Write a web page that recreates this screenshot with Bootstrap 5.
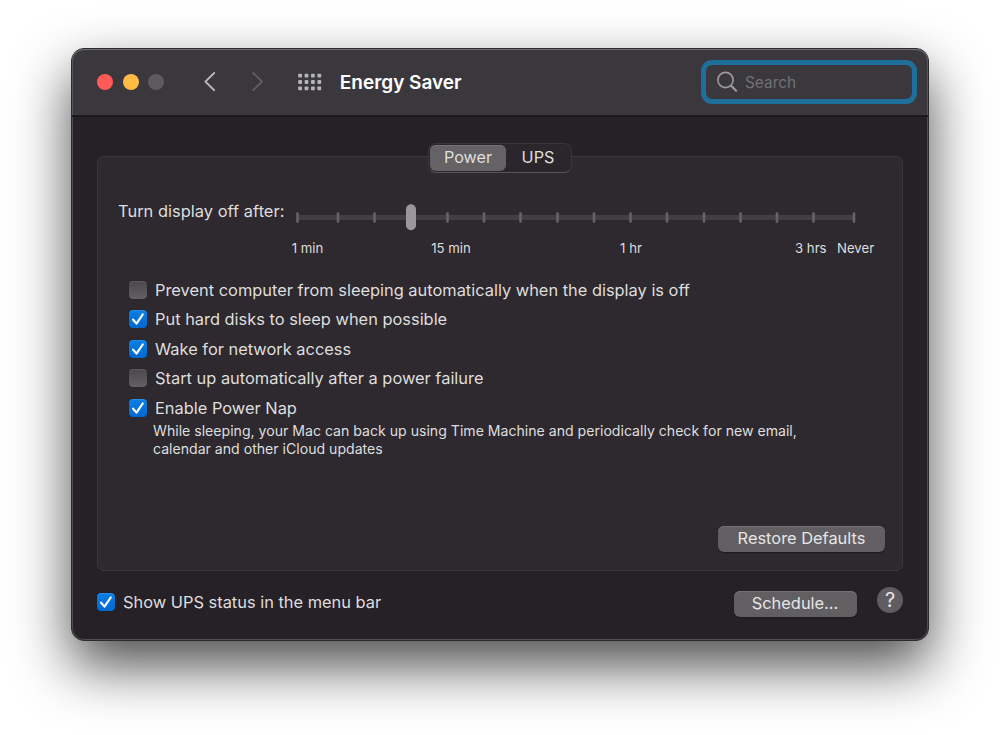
<!DOCTYPE html>
<html lang="en" data-bs-theme="dark">
<head>
<meta charset="utf-8">
<title>Energy Saver</title>
<link href="https://cdn.jsdelivr.net/npm/bootstrap@5.3.0/dist/css/bootstrap.min.css" rel="stylesheet">
<style>
body{background:#fff;font-family:Inter,"Liberation Sans",sans-serif;font-size:16.4px;line-height:20px;color:#dfdedf;height:735px;overflow:hidden;padding:48px 0 0 71px}
.window{width:858px;height:593px;border:1px solid #2b2b2d;border-radius:13px;background:#262127;box-shadow:inset 0 0 0 1px #4f4d50,inset 0 1px 0 1px #5f6061,0 25px 56px rgba(0,0,0,.7)}
.titlebar{height:68px;background:#3a383c;border-bottom:2px solid #1b191c;border-radius:12px 12px 0 0;padding:0 11px 0 25px;box-shadow:inset 0 1px 0 #707170,inset 1px 0 0 #58575a,inset -1px 0 0 #58575a}
.light{width:16px;height:16px;border-radius:50%;margin-right:9.6px}
.win-title{font-size:19px;font-weight:600;color:#fff;margin:1px 0 0 18px;line-height:24px}
.search{width:216px;height:44px;border:5px solid #1f6f9c;border-radius:11px;padding:0 0 0 10px}
.search input{width:150px;background:none;border:0;outline:0;padding:0;font-size:15.4px;line-height:20px;color:#fff;margin:2px 0 0 7px}
.search input::placeholder{color:#727074;opacity:1}
.content-area{padding:39px 25px 0}
.pane{height:415px;border:1px solid #3a373c;border-radius:7px;background:#2d292e;padding:0 17px 18px 20px}
.segments{width:144px;height:30px;margin:-14px 0 0 310px;border:1px solid #39363b;border-bottom-color:#58555a;border-radius:8px;background:#2a262b;padding:1px}
.segments button{border:0;padding:0;background:none;border-radius:6px;color:#dfdedf;font-size:16.2px;line-height:22px;height:26px;padding-bottom:2px}
.segments .seg-power{width:76px;background:#646265;box-shadow:inset 0 1px 0 #737174}
.segments .seg-ups{width:64px}
.slider-row{margin-top:29px;height:36px}
.slider-label{width:177px;margin-top:-1px;white-space:nowrap;letter-spacing:.04px}
.tick-labels{font-size:13.2px;line-height:18px;margin:1px 0 0 160px;white-space:nowrap;height:18px;text-align:center}
.tick-labels span{flex:none}
.options{margin:18px 0 0 11px}
.opt{height:29.5px;gap:8px;white-space:nowrap}
.cb{appearance:none;width:18px;height:18px;margin:0;border:0;border-radius:4px;background:linear-gradient(#4b484c,#636064);box-shadow:0 0 1px #1b181c,inset 0 1px 0 #5b585c;flex:none}
.cb:checked{background:url("data:image/svg+xml,%3Csvg xmlns='http://www.w3.org/2000/svg' viewBox='0 0 18 18'%3E%3Cpath d='M4.1 9.7 7.5 13.6 13.7 4.5' fill='none' stroke='%23fff' stroke-width='2.2' stroke-linecap='round' stroke-linejoin='round'/%3E%3C/svg%3E"),linear-gradient(#0a7fe4,#0068cf);box-shadow:0 0 1px #1b181c,inset 0 1px 0 #258ee8}
.note{font-size:14.1px;line-height:18px;margin:-1px 0 0 24px;white-space:nowrap}
.push{border:0;border-radius:6px;height:26px;padding:0 0 2px;background:#615f62;color:#e6e5e6;line-height:24px;box-shadow:inset 0 1px 0 #747275,0 1px 1px #1d191e}
.footer-row{height:26px;margin-top:16px}
.help{width:26px;height:26px;border-radius:50%;background:#5f5d60;border:0;padding:0;color:#e6e5e6;font-size:20px;line-height:26px;margin-left:20.500px}
</style>
</head>
<body>
<main class="window d-flex flex-column">
  <header class="titlebar d-flex align-items-center">
    <span class="light" style="background:#ff5a58"></span>
    <span class="light" style="background:#ffbb43"></span>
    <span class="light" style="background:#5d5b5f"></span>
    <svg width="66" height="24" class="ms-4" viewBox="0 0 66 24" fill="none" stroke-width="1.9" stroke-linecap="round" stroke-linejoin="round"><path d="M16.200 3 7.400 11.600l8.800 8.600" stroke="#b9b8ba"/><path d="M55.200 3 64 11.600l-8.800 8.600" stroke="#605e62"/></svg>
    <svg id="grid-icon" width="24" height="18" viewBox="0 0 24 18" fill="#b5b4b6" style="margin-left:34px"></svg>
    <h1 class="win-title">Energy Saver</h1>
    <label class="search d-flex align-items-center ms-auto">
      <svg width="22" height="22" viewBox="0 0 22 22" fill="none" stroke="#9c9b9d" stroke-linecap="round"><circle cx="9.500" cy="9" r="7.600" stroke-width="1.600"/><path d="m15.200 14.700 4.900 5" stroke-width="2.200"/></svg>
      <input type="text" placeholder="Search">
    </label>
  </header>
  <div class="content-area">
    <section class="pane d-flex flex-column">
      <div class="segments d-flex"><button class="seg-power">Power</button><button class="seg-ups">UPS</button></div>
      <div class="slider-row d-flex">
        <div class="slider-label">Turn display off after:</div>
        <svg id="slider" width="562" height="30" viewBox="0 0 562 30"><path d="M2.500 15.400h557" stroke="#423e43" stroke-width="5"/></svg>
      </div>
      <div class="tick-labels d-flex"><span style="width:59px">1 min</span><span style="width:228px">15 min</span><span style="width:132px">1 hr</span><span style="width:30px;margin-left:98px">3 hrs</span><span style="margin-left:12px">Never</span></div>
      <div class="options">
        <label class="opt d-flex align-items-center"><input class="cb" type="checkbox">Prevent computer from sleeping automatically when the display is off</label>
        <label class="opt d-flex align-items-center"><input class="cb" type="checkbox" checked>Put hard disks to sleep when possible</label>
        <label class="opt d-flex align-items-center"><input class="cb" type="checkbox" checked>Wake for network access</label>
        <label class="opt d-flex align-items-center"><input class="cb" type="checkbox">Start up automatically after a power failure</label>
        <label class="opt d-flex align-items-center"><input class="cb" type="checkbox" checked>Enable Power Nap</label>
        <p class="note">While sleeping, your Mac can back up using Time Machine and periodically check for new email,<br>calendar and other iCloud updates</p>
      </div>
      <button class="push mt-auto align-self-end" style="width:167px">Restore Defaults</button>
    </section>
    <footer class="footer-row d-flex align-items-start">
      <label class="opt d-flex align-items-center"><input class="cb" type="checkbox" checked>Show UPS status in the menu bar</label>
      <button class="push ms-auto" style="width:123px;margin-top:4px">Schedule...</button>
      <button class="help">?</button>
    </footer>
  </div>
</main>
<script src="https://cdn.jsdelivr.net/npm/bootstrap@5.3.0/dist/js/bootstrap.bundle.min.js"></script>
<script>
// Show-all grid: four columns by three rows
let dots = '';
for (let r = 0; r < 3; r++) for (let c = 0; c < 4; c++) dots += `<rect x="${.2 + c * 6.4}" y="${.8 + r * 6.3}" width="3.800" height="3.800" rx=".8"/>`;
document.getElementById('grid-icon').innerHTML = dots;
// Slider ticks, then the thumb on the fourth stop
const ticks = [2.5, 43, 79.500, 152.500, 189, 225.500, 262.500, 299, 335.500, 372, 409, 445.500, 482, 518.500, 559];
document.getElementById('slider').innerHTML += ticks.map(x => `<rect x="${x - 1.3}" y="10.200" width="2.600" height="10.600" rx="1" fill="#666367"/>`).join('') + '<rect x="111" y="2.200" width="10" height="26" rx="5" fill="#999799"/>';
</script>
</body>
</html>
